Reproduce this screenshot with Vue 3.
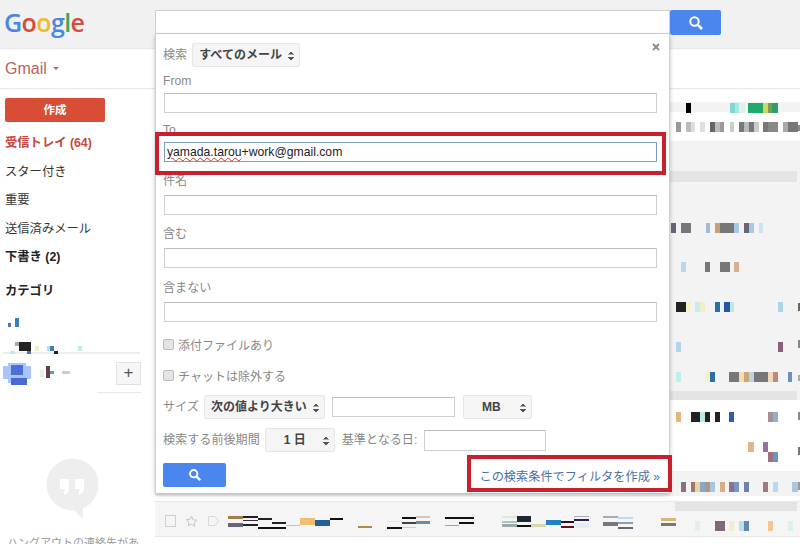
<script setup>
const fields = [
  { label: 'From', cls: 'f-from' },
  { label: 'To', cls: 'f-to', focus: true },
  { label: '件名', cls: 'f-subject' },
  { label: '含む', cls: 'f-has' },
  { label: '含まない', cls: 'f-not' }
]
const nav = [
  { t: '受信トレイ (64)', c: 'inbox' },
  { t: 'スター付き' },
  { t: '重要' },
  { t: '送信済みメール' },
  { t: '下書き (2)', c: 'bold' }
]
const bands = [
  [13, '#fff'], [10, '#f3f3f3'], [29, '#fff'], [30, '#f3f3f3'], [11, 'band'],
  [209, '#f3f3f3'], [9, 'band'], [71, '#fff'], [25, '#f3f3f3'], [5, '#fff']
]
const row = (y, h, list) => list.map(([x, w, c]) => [x, y, w, h, c])
const pieces = [
  ...row(103, 10, [[686,5,'#000'],[730,5,'#7fd8d4'],[735,4,'#a8e8e4'],[739,6,'#dff0ee'],[748,15,'#1fa86b'],[763,5,'#cfd95e'],[768,4,'#7a9e4f'],[772,6,'#2ca06a']]),
  ...row(122, 10, [[676,5,'#999'],[686,5,'#bbb'],[691,4,'#ddd'],[700,5,'#e0e0e0'],[710,5,'#666'],[715,5,'#bbb'],[720,4,'#999'],[730,4,'#ccc'],[739,5,'#777'],[744,5,'#bbb'],[749,5,'#777'],[754,5,'#ccc'],[763,5,'#777'],[768,10,'#888'],[783,5,'#aaa'],[788,10,'#777']]),
  ...row(223, 10, [[671,5,'#667'],[681,10,'#777'],[706,4,'#a0bcd8'],[715,5,'#c8a078'],[720,14,'#777'],[734,5,'#a8c8e8'],[744,5,'#667'],[749,5,'#a8c8e8'],[759,4,'#cde4f0']]),
  ...row(262, 10, [[681,5,'#b4d8ec'],[705,5,'#777'],[720,10,'#777'],[734,5,'#d8b090']]),
  ...row(302, 10, [[676,10,'#222'],[686,5,'#f6f3c8'],[695,5,'#c8ecec'],[700,5,'#eef0c8'],[715,5,'#2a70a8'],[724,6,'#2458a0'],[730,4,'#bde8e8'],[778,5,'#a8d4ec']]),
  ...row(342, 10, [[676,5,'#b4d4ec'],[778,5,'#8a6078']]),
  ...row(372, 10, [[676,5,'#c4ecec'],[705,5,'#f4f0c8'],[710,5,'#2a70a8'],[729,10,'#777'],[739,5,'#f0e0b0'],[744,5,'#c8a878'],[749,5,'#b8d4e4'],[754,14,'#777'],[768,5,'#f2d8b8'],[773,5,'#c08878'],[788,4,'#6a90c0']]),
  ...row(412, 10, [[676,5,'#e0b880'],[691,9,'#222'],[700,5,'#bce8e8'],[705,5,'#222'],[715,5,'#222'],[729,5,'#3060a0'],[768,5,'#a89090'],[773,5,'#90b0d0']]),
  ...row(442, 10, [[748,6,'#e0b888'],[763,5,'#9a7098']]),
  ...row(452, 10, [[768,5,'#a07080'],[773,5,'#6898c0']]),
  ...row(482, 10, [[681,5,'#8a7080'],[691,4,'#a07868'],[695,5,'#f0d0a8'],[700,5,'#88a8c8'],[705,5,'#b09888'],[710,5,'#a8c8e0'],[720,5,'#d8b080'],[729,5,'#907090'],[734,5,'#7898c0'],[744,5,'#7080a8'],[763,5,'#a07880'],[773,5,'#b8d8f0'],[792,6,'#a8c8e0']]),
  [675, 502, 122, 9, '#e4e4e4'],
  ...row(521, 10, [[695,5,'#dff0f0'],[715,10,'#806878'],[729,5,'#f0f0c8'],[739,5,'#bce0e8'],[744,5,'#6088b0'],[768,5,'#f0c898'],[788,5,'#d8f0ee']]),
  // right edge marks
  [798,125,2,6,'#888'],[798,303,2,8,'#666'],[798,340,2,8,'#888'],[798,375,2,6,'#aaa'],[798,412,2,8,'#888'],[798,447,2,8,'#777'],[798,482,2,8,'#999'],
  // bottom row stripes
  [228,516,15,3,'#a08048'],[228,523,15,4,'#667'],[243,516,15,2,'#222'],[243,520,15,1,'#333'],[243,524,15,2,'#222'],
  [258,518,14,2,'#222'],[272,522,14,2,'#222'],[258,527,28,2,'#111'],[286,525,14,1,'#a8c8d8'],[300,518,15,7,'#f0c070'],
  [315,520,15,6,'#2060a0'],[330,518,13,2,'#111'],[358,526,14,2,'#b08848'],[387,527,15,2,'#111'],[387,521,15,1,'#d8ecf0'],
  [402,517,14,2,'#111'],[402,522,14,2,'#444'],[402,527,14,1,'#d8d0b0'],[416,516,14,2,'#d8c8a8'],[416,521,14,3,'#6590a0'],
  [445,517,14,2,'#111'],[445,525,14,1,'#c0a060'],[459,517,15,2,'#111'],[459,522,15,2,'#111'],
  [502,516,15,2,'#e0e8d8'],[502,521,15,2,'#b0c0c0'],[502,524,15,3,'#99a8a8'],[517,516,14,6,'#1a2a30'],[517,525,14,2,'#111'],
  [531,524,15,3,'#d8d8b0'],[546,520,15,5,'#2080c8'],[561,521,13,2,'#301020'],[561,526,13,2,'#601020'],
  [574,516,15,1,'#aab'],[574,519,15,2,'#302050'],[574,523,15,5,'#e0f0f0'],[603,516,15,2,'#aaa'],[603,522,15,4,'#777'],
  [618,517,15,2,'#bde'],[618,522,15,2,'#99a'],[618,527,15,2,'#667'],[661,518,15,3,'#d8b878'],[661,523,15,3,'#807868'],
  // sidebar
  [8,323,3,4,'#5078a0'],[15,318,4,9,'#3a80b8'],[15,342,4,4,'#aaa'],[19,342,12,9,'#222'],[35,346,4,5,'#f0ecc8'],
  [47,346,3,5,'#bde'],[50,346,4,5,'#3a80a8'],[78,346,4,5,'#c8e8f0'],[3,352,137,2,'#eee'],
  [10,351,5,3,'#c8e4e4'],[27,351,4,3,'#4080a8'],[54,351,4,3,'#222'],
  [3,366,28,13,'#a8c4f8'],[8,363,18,20,'#a8c4f8'],[11,365,12,10,'#4a70d8'],[11,378,16,7,'#4a6ad0'],
  [40,370,4,7,'#e8f0e0'],[46,366,4,12,'#604050'],[50,371,4,3,'#58a0a8'],[62,371,8,3,'#ccc']
]
const box = ([x, y, w, h, c]) => ({ left: x + 'px', top: y + 'px', width: w + 'px', height: h + 'px', background: c })
</script>

<template>
  <div class="page">
    <header class="top">
      <div class="logo"><span class="b">G</span><span class="r">o</span><span class="y">o</span><span class="b">g</span><span class="g">l</span><span class="r">e</span></div>
      <div class="searchbox"></div>
      <button class="sbtn top-btn">
        <svg width="16" height="16" viewBox="0 0 16 16"><circle cx="6.5" cy="6.5" r="4.2" fill="none" stroke="#fff" stroke-width="2"/><path d="M9.8 9.8 14 14" stroke="#fff" stroke-width="2.6"/></svg>
      </button>
    </header>
    <div class="subbar"><span class="gmail">Gmail</span><span class="caret"></span></div>
    <div class="main">
      <aside class="side">
        <div class="compose">作成</div>
        <div v-for="n in nav" :key="n.t" class="nav" :class="n.c">{{ n.t }}</div>
        <div class="nav bold cat">カテゴリ</div>
        <div class="plus">+</div>
        <div class="rule"></div>
        <svg class="bubble" width="54" height="62" viewBox="0 0 54 62">
          <circle cx="26.500" cy="26.500" r="26" fill="#eeeeee"/>
          <path d="M26 50h11v11z" fill="#eeeeee"/>
          <path d="M14 21h9v9c0 4-2 6-5 7v-4c1-.5 1-1.500 1-2h-5zM29 21h9v9c0 4-2 6-5 7v-4c1-.5 1-1.500 1-2h-5z" fill="#fff"/>
        </svg>
        <div class="hang">ハングアウトの連絡先があ</div>
      </aside>
      <section class="list">
        <div v-for="(b, i) in bands" :key="i" class="lrow" :class="{ band: b[1] === 'band' }" :style="{ height: b[0] + 'px', background: b[1] === 'band' ? undefined : b[1] }"></div>
        <div class="mailrow">
          <span class="mcheck"></span>
          <svg class="star" width="13" height="13" viewBox="0 0 24 24"><path d="M12 2.500l2.900 6.300 6.900.8-5.100 4.700 1.400 6.800L12 16.700l-6.100 3.400 1.400-6.800-5.100-4.700 6.900-.8z" fill="none" stroke="#c4c4c4" stroke-width="1.800"/></svg>
          <svg class="tag" width="11" height="10" viewBox="0 0 11 10"><path d="M.5.500h6.500l3.500 4.500-3.500 4.500h-6.500z" fill="none" stroke="#d8d8d8"/></svg>
        </div>
      </section>
    </div>

    <div class="mosaic">
      <i v-for="(p, i) in pieces" :key="i" :style="box(p)"></i>
    </div>

    <div class="panel">
      <svg class="close" width="8" height="8" viewBox="0 0 8 8"><path d="M1 1l6 6M7 1 1 7" stroke="#888" stroke-width="1.800"/></svg>
      <div class="line first">
        <span class="lab">検索</span>
        <div class="sel sel-all">すべてのメール<span class="arrows"></span></div>
      </div>
      <div v-for="f in fields" :key="f.label" class="field" :class="f.cls">
        <div class="lab">{{ f.label }}</div>
        <div class="inp" :class="{ focus: f.focus }">
          <template v-if="f.focus"><span class="wavy">yamada.tarou</span>+work@gmail.com</template>
        </div>
      </div>
      <label class="chk c1"><span class="cb"></span>添付ファイルあり</label>
      <label class="chk c2"><span class="cb"></span>チャットは除外する</label>
      <div class="line size">
        <span class="lab">サイズ</span>
        <div class="sel sel-size">次の値より大きい<span class="arrows"></span></div>
        <div class="inp small-a"></div>
        <div class="sel sel-mb">MB<span class="arrows"></span></div>
      </div>
      <div class="line period">
        <span class="lab">検索する前後期間</span>
        <div class="sel sel-day">1 日<span class="arrows"></span></div>
        <span class="lab base">基準となる日:</span>
        <div class="inp small-b"></div>
      </div>
      <div class="foot">
        <button class="sbtn foot-btn">
          <svg width="14" height="14" viewBox="0 0 16 16"><circle cx="6.500" cy="6.500" r="4.200" fill="none" stroke="#fff" stroke-width="2.200"/><path d="M9.800 9.800 14 14" stroke="#fff" stroke-width="2.800"/></svg>
        </button>
        <a class="flink">この検索条件でフィルタを作成 »</a>
      </div>
    </div>

    <div class="redbox r1"></div>
    <div class="redbox r2"></div>
  </div>
</template>

<style>
html, body { margin: 0; background: #fff; }
</style>

<style scoped>
.page {
  position: relative;
  width: 800px;
  height: 544px;
  overflow: hidden;
  background: #fff;
  font-family: "Liberation Sans", "Noto Sans CJK JP", sans-serif;
  font-size: 12px;
  color: #333;
}
.top {
  display: flex;
  align-items: flex-start;
  height: 48px;
  background: #f1f1f1;
  border-bottom: 1px solid #e5e5e5;
}
.logo {
  width: 151px;
  margin-left: 4px;
  font-family: "Open Sans", sans-serif;
  font-size: 25px;
  line-height: 44px;
  letter-spacing: -0.6px;
  font-weight: 600;
}
.b { color: #4a86e0; }
.r { color: #d9493c; }
.y { color: #eebb30; }
.g { color: #3fa757; }
.searchbox {
  width: 513px;
  height: 22px;
  margin-top: 10px;
  background: #fff;
  border: 1px solid #cfcfcf;
  box-sizing: content-box;
}
.sbtn {
  display: flex;
  align-items: center;
  justify-content: center;
  padding: 0;
  border: 0;
  border-radius: 2px;
  background: #4a86ee;
}
.top-btn {
  width: 51px;
  height: 25px;
  margin-top: 10px;
}
.subbar {
  display: flex;
  align-items: center;
  height: 40px;
  padding-left: 5px;
  border-bottom: 1px solid #e5e5e5;
  box-sizing: border-box;
}
.gmail {
  font-size: 16px;
  color: #b8645c;
}
.caret {
  margin-left: 6px;
  border: 3px solid transparent;
  border-top: 3px solid #b8645c;
  border-bottom: 0;
}
.main {
  display: flex;
  height: 455px;
}
.side {
  width: 155px;
  flex: none;
  overflow: hidden;
  padding-top: 9px;
  box-sizing: border-box;
}
.compose {
  width: 100px;
  height: 24px;
  margin: 0 0 7px 5px;
  background: #d94c35;
  border-radius: 2px;
  color: #fff;
  font-size: 11.500px;
  font-weight: 700;
  line-height: 24px;
  text-align: center;
}
.nav {
  height: 28.500px;
  padding-left: 5px;
  font-size: 12.300px;
  line-height: 28.500px;
  white-space: nowrap;
}
.inbox { color: #c5483c; font-weight: 700; }
.bold { font-weight: 700; color: #222; }
.cat { margin-top: 5px; }
.plus {
  width: 23px;
  height: 21px;
  margin: 57px 0 0 116px;
  border: 1px solid #e2e2e2;
  background: #f6f6f6;
  color: #555;
  font-size: 17px;
  line-height: 20px;
  text-align: center;
}
.rule {
  width: 44px;
  height: 1px;
  margin: 7px 0 0 97px;
  background: #e6e6e6;
}
.bubble {
  display: block;
  margin: 65px 0 0 46px;
}
.hang {
  margin: 15px 0 0 7px;
  font-size: 11px;
  line-height: 16px;
  color: #999;
  white-space: nowrap;
}
.list {
  flex: 1;
  display: flex;
  flex-direction: column;
}
.lrow { flex: none; }
.band {
  background: linear-gradient(to right, #e4e4e4 642px, #f3f3f3 642px);
}
.mailrow {
  display: flex;
  align-items: center;
  height: 36px;
  padding: 4px 0 0 10px;
  background: #f5f5f5;
  border-top: 1px solid #e8e8e8;
  border-bottom: 1px solid #e8e8e8;
  box-sizing: border-box;
}
.mcheck {
  width: 9px;
  height: 10px;
  border: 1px solid #cfcfcf;
}
.star { margin-left: 9px; }
.tag { margin-left: 10px; }
.mosaic {
  position: absolute;
  inset: 0;
}
.mosaic i {
  position: absolute;
  display: block;
}
.panel {
  position: absolute;
  left: 155px;
  top: 34px;
  width: 515px;
  height: 459px;
  padding: 9px 0 0 7px;
  box-sizing: border-box;
  background: #fff;
  border-left: 1px solid #d0d0d0;
  border-right: 1px solid #d0d0d0;
  box-shadow: 0 2px 4px rgba(0, 0, 0, 0.25);
}
.close {
  position: absolute;
  right: 9px;
  top: 9px;
}
.lab {
  color: #888;
  font-size: 12.100px;
  line-height: 16px;
  white-space: nowrap;
}
.line {
  display: flex;
  align-items: center;
  height: 24px;
}
.sel {
  position: relative;
  height: 24px;
  box-sizing: border-box;
  background: #f5f5f5;
  border: 1px solid #e6e6e6;
  border-radius: 2px;
  color: #444;
  font-size: 12px;
  font-weight: 700;
  line-height: 22px;
  white-space: nowrap;
}
.arrows {
  position: absolute;
  right: 5px;
  top: 7px;
  width: 6px;
  height: 9px;
  background:
    linear-gradient(135deg, transparent 50%, #555 50%) left top / 3px 3.500px no-repeat,
    linear-gradient(225deg, transparent 50%, #555 50%) right top / 3px 3.500px no-repeat,
    linear-gradient(45deg, transparent 50%, #555 50%) left bottom / 3px 3.500px no-repeat,
    linear-gradient(315deg, transparent 50%, #555 50%) right bottom / 3px 3.500px no-repeat;
}
.sel-all { width: 108px; margin-left: 5px; padding-left: 6px; }
.field .lab { height: 16px; }
.inp {
  height: 20px;
  box-sizing: border-box;
  background: #fff;
  border: 1px solid #cfcfcf;
  border-top-color: #bdbdbd;
  color: #222;
  font-size: 12.200px;
  line-height: 18px;
}
.field .inp { width: 493px; margin-left: 1px; }
.f-from { margin-top: 6px; }
.f-from .inp, .f-to .inp { margin-top: 4px; }
.f-to { margin-top: 9px; }
.f-subject { margin-top: 11px; }
.f-has { margin-top: 11px; }
.f-not { margin-top: 12px; }
.f-subject .inp, .f-has .inp, .f-not .inp { margin-top: 6px; }
.inp.focus {
  border-color: #7f9fc0;
  padding-left: 2px;
}
.wavy {
  text-decoration: underline wavy #c8382c 1px;
}
.chk {
  display: flex;
  align-items: center;
  height: 16px;
  color: #888;
  font-size: 12px;
}
.c1 { margin-top: 14px; }
.c2 { margin-top: 15px; }
.cb {
  width: 9px;
  height: 9px;
  margin-right: 4px;
  background: #e4e4e4;
  border: 1px solid #bbb;
  border-radius: 2px;
}
.size { margin-top: 12px; }
.sel-size { width: 121px; margin-left: 5px; padding-left: 6px; }
.small-a { width: 123px; margin-left: 7px; }
.sel-mb { width: 69px; margin-left: 8px; padding-left: 18px; }
.period { margin-top: 9px; }
.sel-day { width: 70px; margin-left: 5px; padding-left: 18px; }
.base { margin-left: 7px; }
.small-b { width: 122px; height: 21px; margin-left: 7px; }
.foot {
  display: flex;
  justify-content: space-between;
  align-items: flex-start;
  height: 24px;
  margin-top: 11px;
  padding-right: 9px;
}
.foot-btn { width: 63px; height: 24px; }
.flink {
  margin-top: 6px;
  color: #4a6fa5;
  font-size: 12.200px;
  line-height: 16px;
  white-space: nowrap;
}
.redbox {
  position: absolute;
  box-sizing: border-box;
  border: 4px solid #c8202c;
}
.r1 { left: 155px; top: 132px; width: 511px; height: 43px; }
.r2 { left: 467px; top: 455px; width: 205px; height: 37px; }
</style>
